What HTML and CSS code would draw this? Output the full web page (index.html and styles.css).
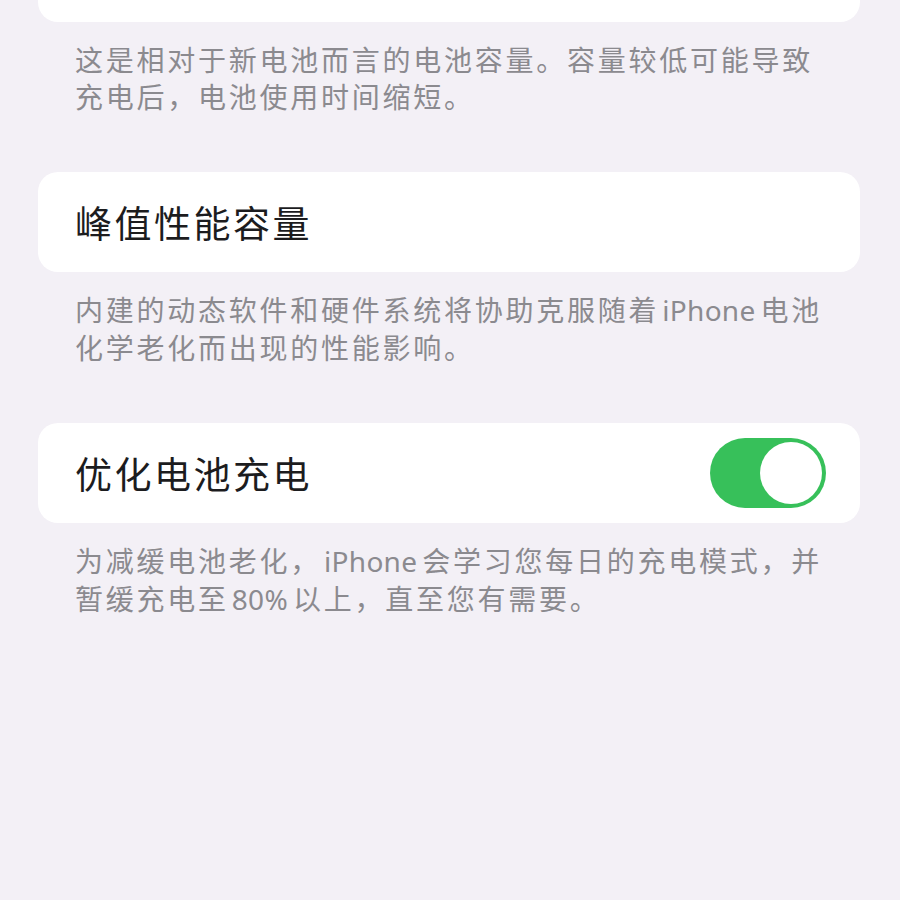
FILE: index.html
```html
<!DOCTYPE html>
<html lang="zh-CN">
<head>
    <meta charset="UTF-8">
    <meta name="viewport" content="width=device-width, initial-scale=1.0">
    <title>电池健康</title>
    <link rel="stylesheet" href="styles.css">
</head>
<body>

    <div class="page">
        <div class="group group-top"></div>
        <p class="footnote">这是相对于新电池而言的电池容量。容量较低可能导致充电后，电池使用时间缩短。</p>

        <div class="group">
            <div class="row">
                <span class="row-title">峰值性能容量</span>
            </div>
        </div>
        <p class="footnote">内建的动态软件和硬件系统将协助克服随着<span class="latin">iPhone</span>电池化学老化而出现的性能影响。</p>

        <div class="group">
            <div class="row">
                <span class="row-title">优化电池充电</span>
                <label class="switch">
                    <input type="checkbox" checked>
                    <span class="slider"></span>
                </label>
            </div>
        </div>
        <p class="footnote">为减缓电池老化，<span class="latin">iPhone</span>会学习您每日的充电模式，并暂缓充电至<span class="latin">80%</span>以上，直至您有需要。</p>
    </div>

</body>
</html>
```

FILE: styles.css
```css
body {
    margin: 0;
    background-color: #f3f0f6;
    font-family: "Noto Sans CJK SC", "Noto Sans", sans-serif;
    height: 100vh;
    overflow: hidden;
}
.page {
    padding: 0 40px 0 38px;
}
.group {
    background-color: #fff;
    border-radius: 20px;
    margin-top: 57px;
}
.group-top {
    height: 22px;
    margin-top: 0;
    border-radius: 0 0 20px 20px;
}
.row {
    height: 100px;
    display: flex;
    align-items: center;
    justify-content: space-between;
    padding: 0 34px 0 37px;
}
.row-title {
    font-size: 37px;
    letter-spacing: 2.5px;
    color: #1c1c1e;
}
.footnote {
    margin: 19px 0 0;
    padding: 0 20px 0 37px;
    font-size: 28px;
    line-height: 37px;
    letter-spacing: 2.75px;
    color: #8b8a8f;
}
.footnote .latin {
    font-family: "Noto Sans", sans-serif;
    letter-spacing: 0.3px;
    margin: 0 5px 0 3px;
}
/* toggle */
.switch {
    position: relative;
    display: inline-block;
    width: 116px;
    height: 70px;
}
.switch input {
    display: none;
}
.slider {
    position: absolute;
    inset: 0;
    background-color: #37c05a;
    border-radius: 35px;
}
.slider::before {
    content: "";
    position: absolute;
    top: 4px;
    right: 4px;
    width: 62px;
    height: 62px;
    border-radius: 50%;
    background-color: #fff;
}
```
